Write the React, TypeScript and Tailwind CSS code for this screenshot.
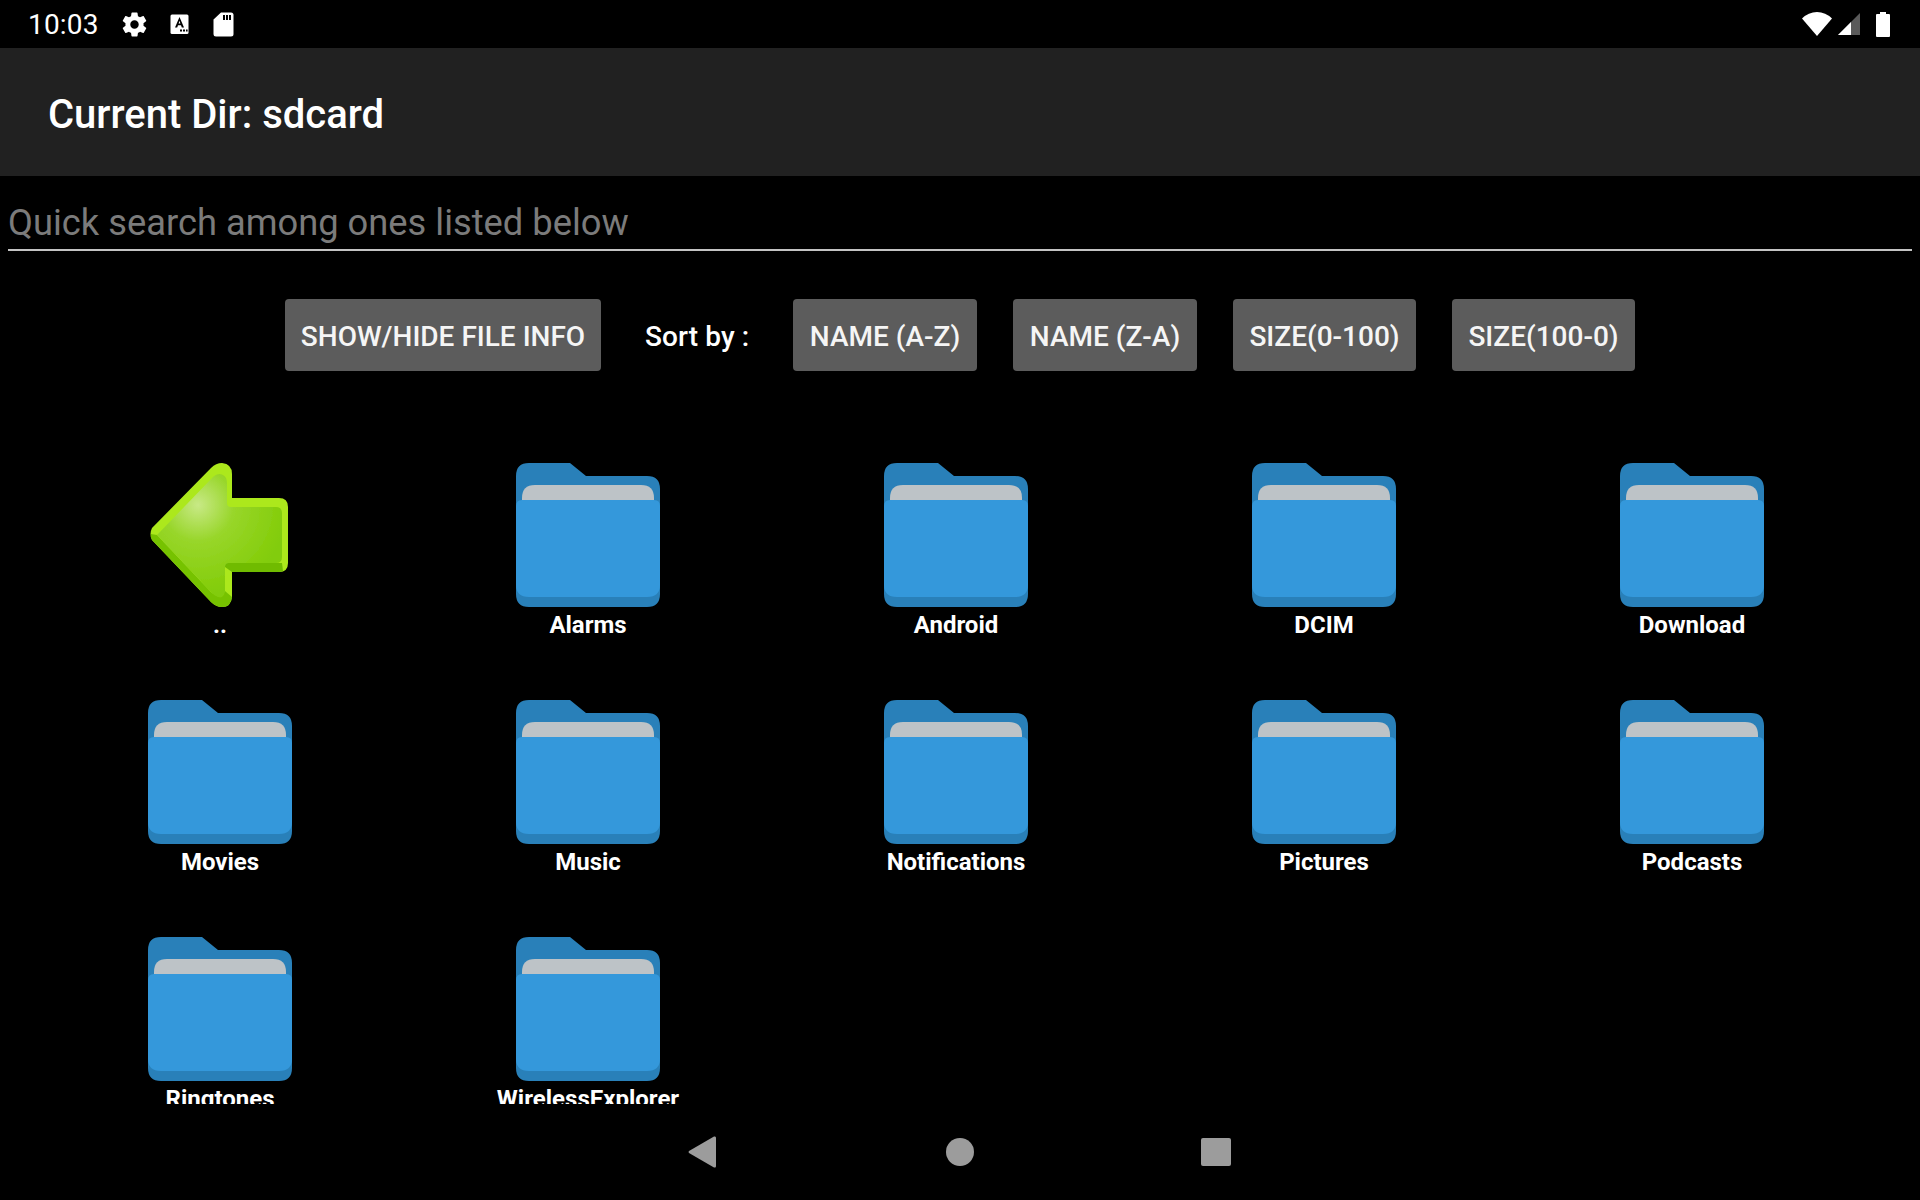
import React from "react";

const Folder = () => (
  <svg width="144" height="145" viewBox="0 0 144 145" className="block">
    <path d="M0 13 Q0 0 13 0 H54 L70 13 H131 Q144 13 144 26 V131 Q144 144 131 144 H13 Q0 144 0 131 Z" fill="#2980b9" />
    <path d="M6 37 V35 Q6 22 19 22 H125 Q138 22 138 35 V42 H6 Z" fill="#bdc3c7" />
    <path d="M0 43 Q0 37 6 37 H138 Q144 37 144 43 V122 Q144 134 131 134 H13 Q0 134 0 122 Z" fill="#3498db" />
  </svg>
);

const Arrow = () => (
  <svg width="144" height="145" viewBox="0 0 144 145" className="block">
    <defs>
      <radialGradient id="arrowGlow" gradientUnits="userSpaceOnUse" cx="50" cy="42" r="90">
        <stop offset="0" stopColor="#c8e986" />
        <stop offset="0.4" stopColor="#98d62a" />
        <stop offset="1" stopColor="#82cc08" />
      </radialGradient>
      <filter id="soft" x="-5%" y="-5%" width="110%" height="110%">
        <feGaussianBlur stdDeviation="0.6" />
      </filter>
    </defs>
    <g filter="url(#soft)">
      <path d="M4 77 Q1 71 4 65 L63 5 Q68 0 74 0 Q84 1 84 11 V35 H131 Q140 35 140 44 V100 Q140 109 131 109 H84 V134 Q83 144 74 144 Q68 144 63 139 Z" fill="#ace81c" />
      <path d="M4 77 Q2 74 3 71 L9 72 L63 129 Q70 136 77 128 L84 134 Q83 144 74 144 Q68 144 63 139 Z" fill="#76c204" />
      <path d="M77 100 H134 L135 108 Q133 109 131 109 H84 L77 104 Z" fill="#6fbb05" />
      <path d="M9 72 L65 14 Q70 9 75 12 Q79 14 79 20 V40 Q79 44 83 44 H128 Q134 44 134 50 V94 Q134 100 128 100 H81 Q77 100 77 104 V128 Q76 136 70 134 Q66 133 63 129 Z" fill="url(#arrowGlow)" />
    </g>
  </svg>
);

const items = ["..", "Alarms", "Android", "DCIM", "Download", "Movies", "Music", "Notifications", "Pictures", "Podcasts", "Ringtones", "WirelessExplorer"];

const buttonClass = "h-[72px] pt-1 rounded-[4px] bg-[#5c5c5c] text-[28px] font-medium text-[#f5f5f5] flex items-center justify-center whitespace-nowrap";

export default function App() {
  return (
    <div className="w-[1920px] h-[1200px] bg-black overflow-hidden flex flex-col text-white font-['Roboto',sans-serif]">
      <div className="h-12 shrink-0 flex items-center pl-[28px] pr-[30px]">
        <span className="text-[28px] leading-none w-[70px] pt-[2px] tracking-[0.2px]">10:03</span>
        <svg width="29" height="29" viewBox="0 0 24 24" fill="#fff" className="ml-[22px]">
          <path d="M19.43 12.98c.04-.32.07-.64.07-.98s-.03-.66-.07-.98l2.11-1.65c.19-.15.24-.42.12-.64l-2-3.46c-.12-.22-.39-.3-.61-.22l-2.49 1c-.52-.4-1.08-.73-1.69-.98l-.38-2.65A.49.49 0 0 0 14 2h-4c-.25 0-.46.18-.49.42l-.38 2.65c-.61.25-1.17.59-1.69.98l-2.49-1c-.23-.09-.49 0-.61.22l-2 3.46c-.13.22-.07.49.12.64l2.11 1.65c-.04.32-.07.65-.07.98s.03.66.07.98l-2.11 1.65c-.19.15-.24.42-.12.64l2 3.46c.12.22.39.3.61.22l2.49-1c.52.4 1.08.73 1.69.98l.38 2.65c.03.24.24.42.49.42h4c.25 0 .46-.18.49-.42l.38-2.65c.61-.25 1.17-.59 1.69-.98l2.49 1c.23.09.49 0 .61-.22l2-3.46c.12-.22.07-.49-.12-.64l-2.11-1.65zM12 15.5c-1.93 0-3.5-1.57-3.5-3.5s1.57-3.5 3.5-3.5 3.5 1.57 3.5 3.5-1.57 3.5-3.5 3.5z" />
        </svg>
        <svg width="20" height="21" viewBox="0 0 20 21" className="ml-[21px]">
          <rect x="0.5" y="0.5" width="18" height="19.5" rx="1.5" fill="#fff" />
          <path fillRule="evenodd" d="M9.5 3 L14 13.5 H11.8 L11 11.3 H8 L7.2 13.5 H5 Z M9.5 6.8 L8.6 9.5 H10.4 Z" fill="#000" />
          <rect x="10" y="15.5" width="2" height="2" fill="#000" />
          <rect x="13" y="15.5" width="2" height="2" fill="#000" />
          <rect x="16" y="15.5" width="1.6" height="2" fill="#000" />
        </svg>
        <svg width="21" height="25" viewBox="0 0 21 25" className="ml-[23px]">
          <path d="M8 0.5 H18 Q20.5 0.5 20.5 3 V22 Q20.5 24.5 18 24.5 H3 Q0.5 24.5 0.5 22 V7.5 Z" fill="#fff" />
          <rect x="10" y="3" width="2" height="5" fill="#000" />
          <rect x="13" y="3" width="2" height="5" fill="#000" />
          <rect x="16" y="3" width="2" height="5" fill="#000" />
        </svg>
        <div className="ml-auto flex items-center">
          <svg width="30" height="24" viewBox="0 0 30 24">
            <path d="M15 24 L0 6.5 Q6.5 0 15 0 Q23.5 0 30 6.5 Z" fill="#fff" />
          </svg>
          <svg width="22" height="22" viewBox="0 0 22 22" className="ml-[6px]">
            <path d="M22 0 V22 H0 Z" fill="#5a5a5a" />
            <path d="M13 9 V22 H0 Z" fill="#fff" />
          </svg>
          <svg width="14" height="26" viewBox="0 0 14 26" className="ml-[16px]">
            <path d="M4 1 H10 V3 H13 Q14 3 14 4 V25 Q14 26 13 26 H1 Q0 26 0 25 V4 Q0 3 1 3 H4 Z" fill="#fff" />
          </svg>
        </div>
      </div>

      <div className="h-32 shrink-0 bg-[#212121] flex items-center pl-12 pt-[6px] text-[40px] font-medium">
        Current Dir: sdcard
      </div>

      <div className="h-[75px] mx-2 shrink-0 border-b-2 border-[#c4c4c4] flex items-center pt-[21px] text-[36.3px] text-[#7b7b7b]">
        Quick search among ones listed below
      </div>

      <div className="flex items-center mt-12 pl-[285px] shrink-0">
        <div className={`${buttonClass} w-[316px]`}>SHOW/HIDE FILE INFO</div>
        <span className="text-[28px] font-medium pt-1 ml-[44px] mr-[43px] w-[105px] tracking-[0.1px] whitespace-nowrap">Sort by :</span>
        <div className="flex gap-9">
          <div className={`${buttonClass} w-[184px]`}>NAME (A-Z)</div>
          <div className={`${buttonClass} w-[184px]`}>NAME (Z-A)</div>
          <div className={`${buttonClass} w-[183px]`}>SIZE(0-100)</div>
          <div className={`${buttonClass} w-[183px]`}>SIZE(100-0)</div>
        </div>
      </div>

      <div className="mt-[92px] ml-9 w-[1840px] h-[641px] overflow-hidden grid grid-cols-5 auto-rows-[237px] shrink-0">
        {items.map((name, i) => (
          <div key={name} className="flex flex-col items-center">
            {i === 0 ? <Arrow /> : <Folder />}
            <span className="text-[24px] leading-[28px] font-bold mt-[3px]">{name}</span>
          </div>
        ))}
      </div>

      <div className="flex-1 relative flex items-center justify-center">
        <svg width="28" height="32" viewBox="0 0 28 32" className="mr-[230px]">
          <path d="M27 0.5 Q28 0.5 28 2 V30 Q28 31.5 27 31.5 L26 31.5 L1 17 Q0 16 1 15 L26 0.5 Z" fill="#9c9c9c" />
        </svg>
        <div className="w-[28px] h-[28px] rounded-full bg-[#9c9c9c]" />
        <div className="w-[30px] h-[28px] rounded-[2px] bg-[#9c9c9c] ml-[227px] mr-[1px]" />
      </div>
    </div>
  );
}
